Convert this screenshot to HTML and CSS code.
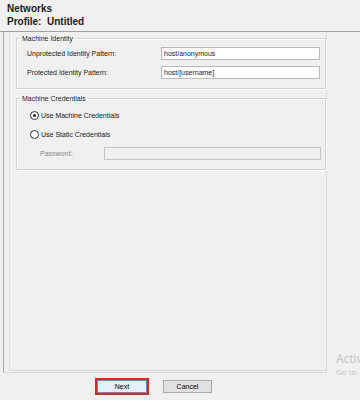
FILE: index.html
```html
<!DOCTYPE html>
<html lang="en">
<head>
    <meta charset="UTF-8">
    <title>Networks</title>
    <link rel="stylesheet" href="styles.css">
</head>
<body>

<div class="header">
    <div class="title">Networks</div>
    <div class="profile">Profile:&nbsp; Untitled</div>
</div>

<div class="frame">
    <div class="panel">
        <!-- Machine Identity -->
        <fieldset class="group identity">
            <legend>Machine Identity</legend>
            <div class="row">
                <label>Unprotected Identity Pattern:</label>
                <div class="field">host/anonymous</div>
            </div>
            <div class="row">
                <label>Protected Identity Pattern:</label>
                <div class="field">host/[username]</div>
            </div>
        </fieldset>

        <!-- Machine Credentials -->
        <fieldset class="group creds">
            <legend>Machine Credentials</legend>
            <div class="radio-row">
                <span class="radio checked"></span>
                <span>Use Machine Credentials</span>
            </div>
            <div class="radio-row">
                <span class="radio"></span>
                <span>Use Static Credentials</span>
            </div>
            <div class="pw-row">
                <label>Password:</label>
                <div class="field disabled"></div>
            </div>
        </fieldset>
    </div>
</div>

<div class="buttons">
    <div class="btn-focus"><button class="btn next">Next</button></div>
    <button class="btn cancel">Cancel</button>
</div>

<div class="watermark">
    <div class="wm-big">Activ</div>
    <div class="wm-small">Go to</div>
</div>

</body>
</html>
```

FILE: styles.css
```css
body {
    margin: 0;
    background: #f0f0f0;
    font-family: "Liberation Sans", Arial, sans-serif;
    color: #1a1a1a;
    width: 360px;
    height: 400px;
    overflow: hidden;
    position: relative;
}

.header {
    padding: 2px 7px 0;
    height: 29px;
    border-bottom: 1px solid #a0a0a0;
}

.title {
    font-weight: bold;
    font-size: 10px;
    line-height: 13px;
}

.profile {
    font-weight: bold;
    font-size: 10px;
    line-height: 13px;
}

.frame {
    margin-left: 3px;
    width: 324px;
    height: 341px;
    border-left: 1px solid #a8a8a8;
    border-right: 1px solid #dadada;
    border-bottom: 1px solid #dadada;
    padding: 1px 0 0 5px;
    box-sizing: border-box;
}

.panel {
    height: 338px;
    border-left: 1px solid #dcdcdc;
    border-bottom: 1px solid #dcdcdc;
    padding: 2px 0 0 6px;
    box-sizing: border-box;
}

.group {
    margin: 0;
    width: 310px;
    box-sizing: border-box;
    border: 1px solid #d3d3d3;
    box-shadow: inset 1px 1px 0 #fff, 1px 1px 0 #fff;
    font-size: 7px;
    padding: 0;
}

.group legend {
    padding: 0 2px;
    font-size: 7px;
    color: #222;
}

.identity {
    height: 54px;
    padding: 2px 4px 0 10px;
}

.identity legend {
    margin-left: -7px;
}

.row {
    display: flex;
    align-items: center;
    height: 19px;
}

.row label {
    width: 134px;
}

.field {
    width: 159px;
    height: 13px;
    box-sizing: border-box;
    background: #fff;
    border: 1px solid #b9b9b9;
    font-size: 7px;
    line-height: 11px;
    padding-left: 2px;
}

.creds {
    margin-top: 6px;
    height: 75px;
    padding: 4px 4px 0 13px;
}

.creds legend {
    margin-left: -10px;
}

.radio-row {
    display: flex;
    align-items: center;
    gap: 2px;
    height: 19px;
}

.radio {
    width: 7px;
    height: 7px;
    border: 1px solid #333;
    border-radius: 50%;
    background: #fff;
    position: relative;
}

.radio.checked::after {
    content: "";
    position: absolute;
    left: 2px;
    top: 2px;
    width: 3px;
    height: 3px;
    border-radius: 50%;
    background: #222;
}

.pw-row {
    display: flex;
    align-items: center;
    height: 19px;
    color: #8a8a8a;
    padding-left: 10px;
}

.pw-row label {
    width: 64px;
}

.field.disabled {
    width: 217px;
    background: #f0f0f0;
    border-color: #c4c4c4;
}

.buttons {
    display: flex;
    align-items: center;
    gap: 14px;
    padding-left: 95px;
    height: 27px;
    border-bottom: 1px solid #c8c8c8;
}

.btn-focus {
    border: 2px solid #d9262d;
    padding: 0;
}

.btn {
    font-family: "Liberation Sans", Arial, sans-serif;
    font-size: 7px;
    height: 13px;
    padding: 0;
    margin: 0;
}

.next {
    width: 50px;
    background: #e5f1fb;
    border: 1px solid #5b8fbe;
    display: block;
}

.cancel {
    width: 49px;
    background: #e1e1e1;
    border: 1px solid #adadad;
}

.watermark {
    position: absolute;
    left: 336px;
    top: 351px;
    color: #c4c4c4;
}

.wm-big {
    font-family: "Open Sans", sans-serif;
    font-size: 12px;
    line-height: 15px;
}

.wm-small {
    font-family: "Open Sans", sans-serif;
    font-size: 8px;
    line-height: 12px;
}
```
